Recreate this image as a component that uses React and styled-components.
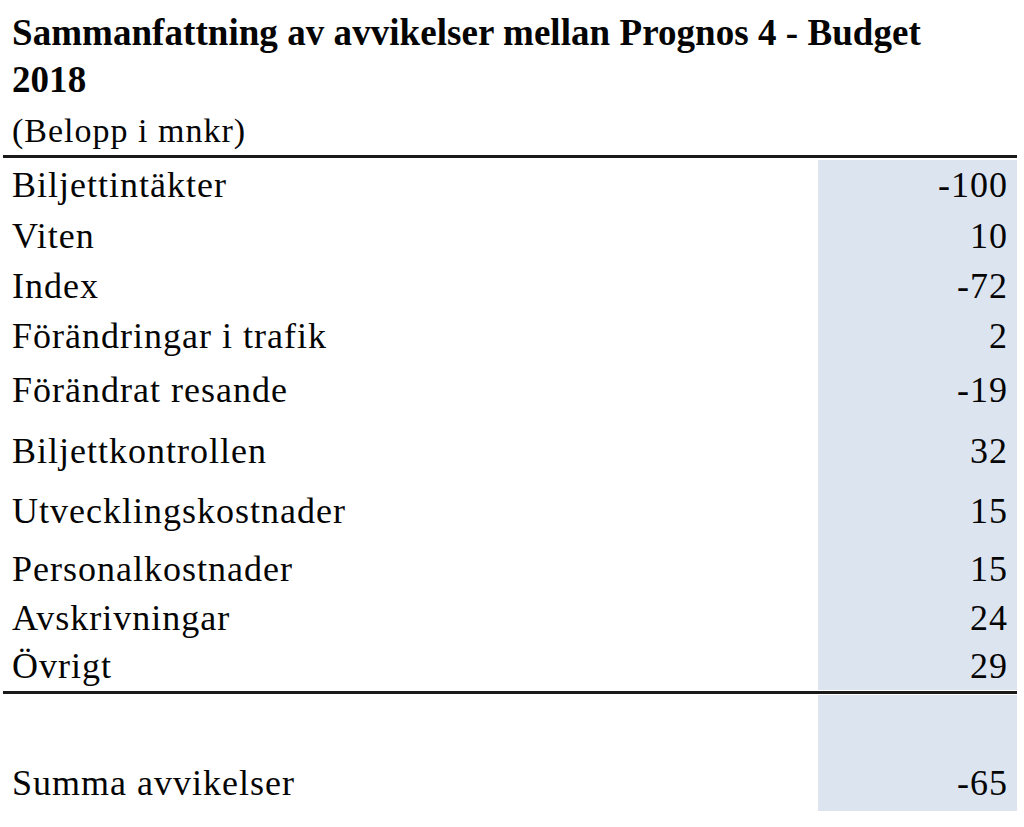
import React from "react";
import styled, { createGlobalStyle } from "styled-components";

const Global = createGlobalStyle`
  html, body { margin: 0; padding: 0; background: #fff; }
  body { font-family: "Liberation Serif", "Times New Roman", serif; color: #050505; }
`;

const Page = styled.div`
  width: 1024px;
  height: 827px;
  padding: 0 0 0 3px;
  box-sizing: border-box;
  overflow: hidden;
`;

const Title = styled.h1`
  margin: 0;
  padding: 9px 0 0 9px;
  font-size: 37px;
  font-weight: bold;
  letter-spacing: 0.05px;
  line-height: 47px;
  width: 960px;
`;

const Subtitle = styled.div`
  box-sizing: border-box;
  height: 52px;
  padding: 11px 0 0 9px;
  font-size: 34px;
  letter-spacing: 1px;
  line-height: 1;
`;

const Table = styled.div`
  width: 1014px;
  display: grid;
  grid-template-columns: 1fr 199px;
  border-top: 3px solid #1a1a1a;
  padding-top: 2px;
`;

const Label = styled.div`
  height: ${(p) => p.$h}px;
  box-sizing: border-box;
  padding: 7px 0 0 9px;
  font-size: 36px;
  letter-spacing: 1px;
  line-height: 1;
  white-space: nowrap;
`;

const Value = styled(Label)`
  background: #dce4f0;
  padding: 7px 9px 0 0;
  text-align: right;
`;

const Rule = styled.div`
  grid-column: 1 / -1;
  height: 0;
  border-top: 3px solid #1a1a1a;
  margin: 1px 0 1px;
`;

const rows = [
  ["Biljettintäkter", "-100", 51],
  ["Viten", "10", 50],
  ["Index", "-72", 50],
  ["Förändringar i trafik", "2", 54],
  ["Förändrat resande", "-19", 61],
  ["Biljettkontrollen", "32", 60],
  ["Utvecklingskostnader", "15", 58],
  ["Personalkostnader", "15", 49],
  ["Avskrivningar", "24", 48],
  ["Övrigt", "29", 49, true],
  ["", "", 63],
  ["Summa avvikelser", "-65", 53],
];

export default function App() {
  return (
    <Page>
      <Global />
      <Title>Sammanfattning av avvikelser mellan Prognos 4 - Budget 2018</Title>
      <Subtitle>(Belopp i mnkr)</Subtitle>
      <Table>
        {rows.map(([label, value, h, rule], i) => (
          <React.Fragment key={i}>
            <Label $h={h}>{label}</Label>
            <Value $h={h}>{value}</Value>
            {rule && <Rule />}
          </React.Fragment>
        ))}
      </Table>
    </Page>
  );
}
